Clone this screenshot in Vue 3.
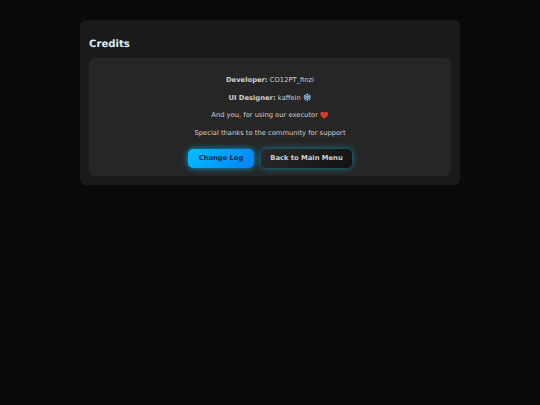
<script setup>
const lines = [
  { label: 'Developer:', text: 'CO12PT_finzi' },
  { label: 'UI Designer:', text: 'kaffein', icon: 'snow' },
  { text: 'And you, for using our executor', icon: 'heart' },
  { text: 'Special thanks to the community for support' }
]
</script>

<template>
  <main class="page">
    <section class="panel">
      <h1 class="title">Credits</h1>
      <div class="card">
        <p v-for="line in lines" :key="line.text" class="line">
          <strong v-if="line.label">{{ line.label }}</strong>
          <span>{{ line.text }}</span>
          <svg v-if="line.icon === 'snow'" class="icon" viewBox="0 0 16 16" aria-hidden="true">
            <path d="M8 1v14M2 4.500l12 7M14 4.500l-12 7M5.500 2L8 4.500 10.500 2M5.500 14L8 11.500l2.500 2.500M1.500 7.500L4.500 6.500 3.800 3.500M14.500 8.500l-3 1 .7 3M14.500 7.500l-3-1 .7-3M1.500 8.500l3 1-.7 3" stroke="#8fc4ea" stroke-width="1.800" fill="none" />
          </svg>
          <svg v-if="line.icon === 'heart'" class="icon" viewBox="0 0 16 16" aria-hidden="true">
            <path d="M8 14.500C3 11 .8 8.500.8 5.500.8 3.200 2.500 1.600 4.500 1.600c1.500 0 2.700.8 3.500 2.100.8-1.300 2-2.100 3.500-2.100 2 0 3.700 1.600 3.700 3.900 0 3-2.200 5.500-7.200 9z" fill="#dd3a32" />
          </svg>
        </p>
        <div class="actions">
          <button class="btn primary">Change Log</button>
          <button class="btn dark">Back to Main Menu</button>
        </div>
      </div>
    </section>
  </main>
</template>

<style scoped>
.page {
  height: 405px;
  box-sizing: border-box;
  padding: 20px 80px 0;
  background: #0a0a0a;
  font-family: "DejaVu Sans", sans-serif;
  text-rendering: geometricPrecision;
}
.panel {
  box-sizing: border-box;
  height: 165px;
  padding: 17px 9px 9px;
  background: #1a1a1a;
  border-radius: 6px;
}
.title {
  margin: 0 0 7px;
  padding-top: 0.500px;
  height: 13.500px;
  font-size: 10.125px;
  line-height: 14px;
  font-weight: 700;
  color: #dfeef2;
}
.card {
  box-sizing: border-box;
  height: 118px;
  padding: 17px 8px 0;
  background: #262626;
  border-radius: 6px;
  text-align: center;
}
.line {
  margin: 0 0 7.500px;
  height: 10px;
  font-size: 6.750px;
  line-height: 10px;
  color: #d0d0d0;
  display: flex;
  justify-content: center;
  align-items: center;
  gap: 2.250px;
}
.line strong { font-weight: 700; }
.icon { width: 8.500px; height: 8.500px; }
.actions {
  display: flex;
  justify-content: center;
  gap: 7px;
  margin-top: 11.500px;
}
.btn {
  height: 18.500px;
  padding: 0;
  border: 0;
  border-radius: 5px;
  font-family: inherit;
  font-size: 6.750px;
  font-weight: 700;
  text-rendering: geometricPrecision;
}
.primary {
  width: 66px;
  color: #0b2a45;
  background: linear-gradient(135deg, #00c0ff, #0a7ff5);
  box-shadow: 0 0 6px rgba(0, 180, 255, .85);
}
.dark {
  width: 91px;
  color: #d0d0d0;
  background: linear-gradient(135deg, #2a2a2a, #111);
  box-shadow: 0 0 6px rgba(0, 200, 255, .6);
}
</style>
